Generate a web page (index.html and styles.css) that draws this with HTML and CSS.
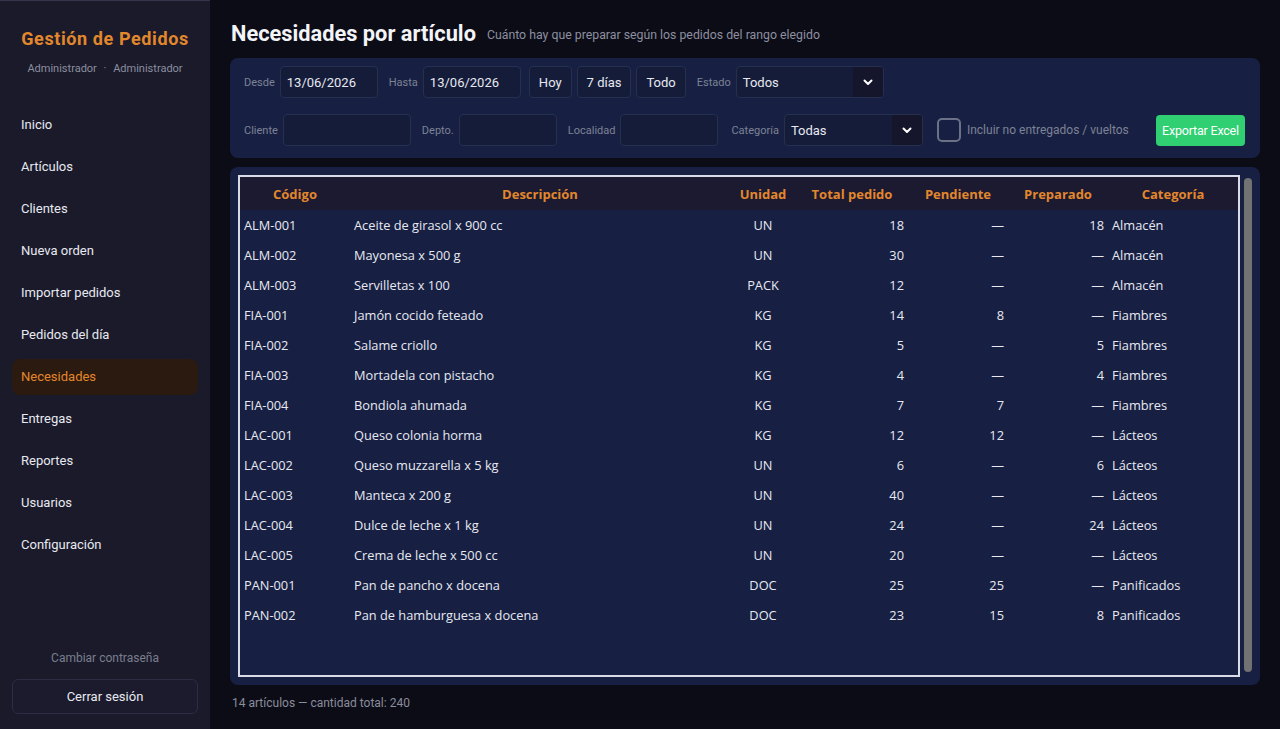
FILE: index.html
```html
<!DOCTYPE html>
<html lang="es">
<head>
    <meta charset="UTF-8">
    <meta name="viewport" content="width=device-width, initial-scale=1.0">
    <title>Gestión de Pedidos - Necesidades</title>
    <link rel="stylesheet" href="styles.css">
</head>
<body>
    <aside class="sidebar">
        <div class="brand">
            <h1>Gestión de Pedidos</h1>
            <p class="user">Administrador <span class="dot">·</span> Administrador</p>
        </div>

        <nav class="nav">
            <a href="#">Inicio</a>
            <a href="#">Artículos</a>
            <a href="#">Clientes</a>
            <a href="#">Nueva orden</a>
            <a href="#">Importar pedidos</a>
            <a href="#">Pedidos del día</a>
            <a href="#" class="active">Necesidades</a>
            <a href="#">Entregas</a>
            <a href="#">Reportes</a>
            <a href="#">Usuarios</a>
            <a href="#">Configuración</a>
        </nav>

        <div class="sidebar-footer">
            <a href="#" class="change-pass">Cambiar contraseña</a>
            <button class="logout">Cerrar sesión</button>
        </div>
    </aside>

    <main class="main">
        <div class="page-header">
            <h2>Necesidades por artículo</h2>
            <span class="page-sub">Cuánto hay que preparar según los pedidos del rango elegido</span>
        </div>

        <section class="filters">
            <div class="filter-row">
                <label class="field">
                    <span class="field-label">Desde</span>
                    <input class="input w-date" type="text" value="13/06/2026">
                </label>
                <label class="field">
                    <span class="field-label">Hasta</span>
                    <input class="input w-date" type="text" value="13/06/2026">
                </label>
                <div class="quick">
                    <button class="btn-quick">Hoy</button>
                    <button class="btn-quick">7 días</button>
                    <button class="btn-quick">Todo</button>
                </div>
                <label class="field">
                    <span class="field-label">Estado</span>
                    <div class="select w-estado">
                        <span>Todos</span>
                        <span class="select-arrow">
                            <svg width="12" height="12" viewBox="0 0 12 12"><path d="M2.5 4.5 6 8l3.5-3.5" fill="none" stroke="#fff" stroke-width="2" stroke-linecap="round" stroke-linejoin="round"/></svg>
                        </span>
                    </div>
                </label>
            </div>

            <div class="filter-row">
                <label class="field">
                    <span class="field-label">Cliente</span>
                    <input class="input w-cliente" type="text">
                </label>
                <label class="field">
                    <span class="field-label">Depto.</span>
                    <input class="input w-short" type="text">
                </label>
                <label class="field">
                    <span class="field-label">Localidad</span>
                    <input class="input w-short" type="text">
                </label>
                <label class="field field-cat">
                    <span class="field-label">Categoría</span>
                    <div class="select w-cat">
                        <span>Todas</span>
                        <span class="select-arrow">
                            <svg width="12" height="12" viewBox="0 0 12 12"><path d="M2.5 4.5 6 8l3.5-3.5" fill="none" stroke="#fff" stroke-width="2" stroke-linecap="round" stroke-linejoin="round"/></svg>
                        </span>
                    </div>
                </label>
                <label class="check">
                    <span class="check-box"></span>
                    <span class="check-label">Incluir no entregados / vueltos</span>
                </label>
                <button class="btn-export">Exportar Excel</button>
            </div>
        </section>

        <section class="table-panel">
            <div class="table-box">
                <table class="grid">
                    <colgroup>
                        <col class="c-code">
                        <col class="c-desc">
                        <col class="c-unit">
                        <col class="c-num">
                        <col class="c-num2">
                        <col class="c-num2">
                        <col class="c-cat">
                    </colgroup>
                    <thead>
                        <tr>
                            <th>Código</th>
                            <th>Descripción</th>
                            <th>Unidad</th>
                            <th>Total pedido</th>
                            <th>Pendiente</th>
                            <th>Preparado</th>
                            <th>Categoría</th>
                        </tr>
                    </thead>
                    <tbody id="rows"></tbody>
                </table>
            </div>
            <div class="scrollbar"></div>
        </section>

        <p class="summary">14 artículos — cantidad total: 240</p>
    </main>

    <script>
        const items = [
            ['ALM-001', 'Aceite de girasol x 900 cc', 'UN', 18, null, 18, 'Almacén'],
            ['ALM-002', 'Mayonesa x 500 g', 'UN', 30, null, null, 'Almacén'],
            ['ALM-003', 'Servilletas x 100', 'PACK', 12, null, null, 'Almacén'],
            ['FIA-001', 'Jamón cocido feteado', 'KG', 14, 8, null, 'Fiambres'],
            ['FIA-002', 'Salame criollo', 'KG', 5, null, 5, 'Fiambres'],
            ['FIA-003', 'Mortadela con pistacho', 'KG', 4, null, 4, 'Fiambres'],
            ['FIA-004', 'Bondiola ahumada', 'KG', 7, 7, null, 'Fiambres'],
            ['LAC-001', 'Queso colonia horma', 'KG', 12, 12, null, 'Lácteos'],
            ['LAC-002', 'Queso muzzarella x 5 kg', 'UN', 6, null, 6, 'Lácteos'],
            ['LAC-003', 'Manteca x 200 g', 'UN', 40, null, null, 'Lácteos'],
            ['LAC-004', 'Dulce de leche x 1 kg', 'UN', 24, null, 24, 'Lácteos'],
            ['LAC-005', 'Crema de leche x 500 cc', 'UN', 20, null, null, 'Lácteos'],
            ['PAN-001', 'Pan de pancho x docena', 'DOC', 25, 25, null, 'Panificados'],
            ['PAN-002', 'Pan de hamburguesa x docena', 'DOC', 23, 15, 8, 'Panificados']
        ];

        const dash = v => (v === null ? '—' : v);

        document.getElementById('rows').innerHTML = items.map(i => `
            <tr>
                <td>${i[0]}</td>
                <td>${i[1]}</td>
                <td class="center">${i[2]}</td>
                <td class="num">${i[3]}</td>
                <td class="num">${dash(i[4])}</td>
                <td class="num">${dash(i[5])}</td>
                <td>${i[6]}</td>
            </tr>`).join('');
    </script>
</body>
</html>
```

FILE: styles.css
```css
:root {
    --bg: #0c0c16;
    --sidebar: #1a1a2b;
    --panel: #172042;
    --input: #141c3a;
    --input-border: #25304f;
    --orange: #e3872d;
    --text: #e8e9f0;
    --muted: #7d8296;
    --green: #2fcf72;
}

* {
    box-sizing: border-box;
    margin: 0;
    padding: 0;
}

body {
    font-family: 'Roboto', 'Liberation Sans', sans-serif;
    background: var(--bg);
    color: var(--text);
    height: 100vh;
    display: flex;
    overflow: hidden;
}

/* Sidebar */

.sidebar {
    width: 210px;
    flex-shrink: 0;
    background: var(--sidebar);
    border-top: 1px solid #34344a;
    display: flex;
    flex-direction: column;
    padding: 0 12px 15px;
}

.brand {
    text-align: center;
    padding-top: 27px;
}

.brand h1 {
    color: var(--orange);
    font-size: 18px;
    font-weight: 700;
    letter-spacing: 0.6px;
    line-height: 22px;
}

.user {
    color: #8b8e9e;
    font-size: 11px;
    margin-top: 12px;
    line-height: 14px;
}

.user .dot {
    margin: 0 4px;
}

.nav {
    display: flex;
    flex-direction: column;
    gap: 6px;
    margin-top: 31px;
}

.nav a {
    display: block;
    height: 36px;
    line-height: 36px;
    padding-left: 9px;
    border-radius: 8px;
    color: var(--text);
    text-decoration: none;
    font-size: 13px;
}

.nav a.active {
    background: #2b1a0f;
    color: var(--orange);
}

.sidebar-footer {
    margin-top: auto;
    display: flex;
    flex-direction: column;
    gap: 14px;
}

.change-pass {
    text-align: center;
    color: #7b7e8e;
    font-size: 12px;
    text-decoration: none;
}

.logout {
    height: 35px;
    background: #1b1b2d;
    border: 1px solid #2c2c42;
    border-radius: 6px;
    color: var(--text);
    font-family: inherit;
    font-size: 13px;
}

/* Main */

.main {
    flex: 1;
    display: flex;
    flex-direction: column;
    padding: 22px 20px 18px;
    min-width: 0;
}

.page-header {
    display: flex;
    align-items: center;
    gap: 11px;
    height: 24px;
    margin-bottom: 12px;
}

.page-header h2 {
    font-size: 21.8px;
    font-weight: 700;
    color: #f3f4f8;
    padding-left: 1px;
    line-height: 24px;
}

.page-sub {
    color: #8d90a0;
    font-size: 12.3px;
    margin-top: 1px;
}

/* Filters */

.filters {
    background: var(--panel);
    border-radius: 8px;
    padding: 8px 15px 12px 14px;
    display: flex;
    flex-direction: column;
    gap: 16px;
}

.filter-row {
    display: flex;
    align-items: center;
    gap: 11px;
}

.field {
    display: flex;
    align-items: center;
    gap: 5px;
}

.field-label {
    color: var(--muted);
    font-size: 11px;
}

.input,
.btn-quick,
.select {
    height: 32px;
    background: var(--input);
    border: 1px solid var(--input-border);
    border-radius: 4px;
    color: var(--text);
    font-family: inherit;
    font-size: 13px;
}

.input {
    padding: 0 6px;
    outline: none;
}

.w-date { width: 98px; }
.w-cliente { width: 128px; }
.w-short { width: 98px; }

.quick {
    display: flex;
    gap: 5px;
    margin-left: -3px;
}

.btn-quick {
    padding: 0 9px;
}

.select {
    display: flex;
    align-items: center;
    justify-content: space-between;
    padding-left: 6px;
    overflow: hidden;
}

.w-estado { width: 148px; }
.w-cat { width: 139px; }

.select-arrow {
    width: 30px;
    height: 100%;
    background: #15152b;
    display: flex;
    align-items: center;
    justify-content: center;
}

.field-cat {
    margin-left: 2px;
}

.check {
    display: flex;
    align-items: center;
    gap: 6px;
    margin-left: 3px;
}

.check-box {
    width: 24px;
    height: 24px;
    border: 2px solid #6b7186;
    border-radius: 5px;
}

.check-label {
    color: var(--muted);
    font-size: 12px;
}

.btn-export {
    margin-left: auto;
    height: 31px;
    width: 89px;
    background: var(--green);
    border: none;
    border-radius: 4px;
    color: #fff;
    font-family: inherit;
    font-size: 12.5px;
    letter-spacing: -0.2px;
}

/* Table */

.table-panel {
    flex: 1;
    margin-top: 9px;
    background: var(--panel);
    border-radius: 8px;
    padding: 8px;
    display: flex;
    gap: 4px;
    min-height: 0;
}

.table-box {
    flex: 1;
    border: 2px solid #d9dce6;
    background: #172043;
    overflow: hidden;
}

.scrollbar {
    width: 8px;
    margin: 3px 0 5px;
    background: #727272;
    border-radius: 4px;
}

.grid {
    width: 100%;
    border-collapse: collapse;
    table-layout: fixed;
    font-family: 'Open Sans', 'Noto Sans', sans-serif;
    font-size: 12.8px;
}

.c-code { width: 110px; }
.c-desc { width: 380px; }
.c-unit { width: 66px; }
.c-num { width: 112px; }
.c-num2 { width: 100px; }
.c-cat { width: 130px; }

.grid th {
    height: 33px;
    background: #1b1a31;
    color: var(--orange);
    font-weight: 700;
    font-size: 13px;
    text-align: center;
}

.grid td {
    height: 30px;
    padding: 0 4px;
    color: var(--text);
    white-space: nowrap;
}

.grid td.center {
    text-align: center;
}

.grid td.num {
    text-align: right;
}

.summary {
    margin-top: 10px;
    color: #8a8d9c;
    font-size: 12px;
    line-height: 16px;
    padding-left: 2px;
}
```
